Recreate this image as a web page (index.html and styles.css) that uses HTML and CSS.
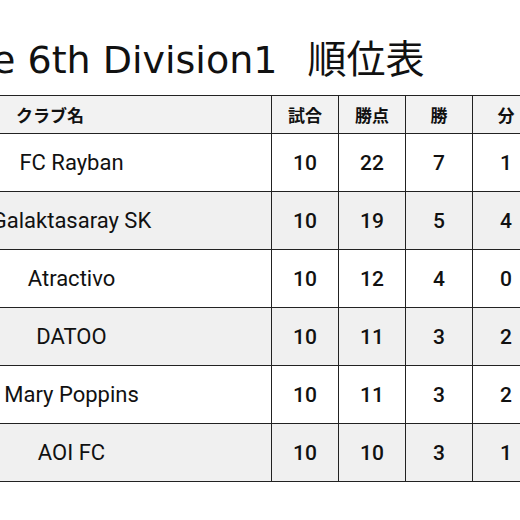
FILE: index.html
```html
<!DOCTYPE html>
<html lang="ja">
<head>
<meta charset="utf-8">
<link rel="stylesheet" href="styles.css">
</head>
<body>
<div class="page">
  <h1 class="title">e 6th Division1<span class="title-jp">順位表</span></h1>
  <table class="standings">
    <thead>
      <tr>
        <th class="club-head">クラブ名</th>
        <th>試合</th>
        <th>勝点</th>
        <th>勝</th>
        <th>分</th>
      </tr>
    </thead>
    <tbody>
      <tr><td class="club">FC Rayban</td><td>10</td><td>22</td><td>7</td><td>1</td></tr>
      <tr class="alt"><td class="club">Galaktasaray SK</td><td>10</td><td>19</td><td>5</td><td>4</td></tr>
      <tr><td class="club">Atractivo</td><td>10</td><td>12</td><td>4</td><td>0</td></tr>
      <tr class="alt"><td class="club">DATOO</td><td>10</td><td>11</td><td>3</td><td>2</td></tr>
      <tr><td class="club">Mary Poppins</td><td>10</td><td>11</td><td>3</td><td>2</td></tr>
      <tr class="alt"><td class="club">AOI FC</td><td>10</td><td>10</td><td>3</td><td>1</td></tr>
    </tbody>
  </table>
</div>
</body>
</html>
```
FILE: styles.css
```css
html, body {
  margin: 0;
  padding: 0;
  background: #ffffff;
}

.page {
  width: 520px;
  height: 520px;
  overflow: hidden;
  padding-top: 38px;
  box-sizing: border-box;
}

.title {
  margin: 0 0 13px -8px;
  font-family: "DejaVu Sans", "Noto Sans CJK JP", sans-serif;
  font-weight: normal;
  font-size: 38px;
  line-height: 44px;
  color: #111111;
  white-space: nowrap;
}

.title-jp {
  margin-left: 30px;
  font-size: 39px;
}

.standings {
  margin-left: -129px;
  border-collapse: collapse;
  table-layout: fixed;
  width: 667px;
}

.standings th,
.standings td {
  border: 1px solid #222222;
  padding: 0;
  text-align: center;
  color: #111111;
}

.standings th {
  height: 37px;
  background: #f2f2f2;
  font-family: "Noto Sans CJK JP", sans-serif;
  font-weight: bold;
  font-size: 17px;
  width: 66px;
}

.standings th.club-head {
  width: 400px;
  text-align: left;
  padding-left: 144px;
  box-sizing: border-box;
}

.standings td {
  height: 57px;
  font-family: "Roboto", "Liberation Sans", sans-serif;
  font-weight: 500;
  font-size: 21px;
}

.standings td.club {
  font-family: "Roboto", "Noto Sans", sans-serif;
  font-weight: normal;
  font-size: 22px;
  white-space: nowrap;
}

.standings tr.alt td {
  background: #f0f0f0;
}
```
